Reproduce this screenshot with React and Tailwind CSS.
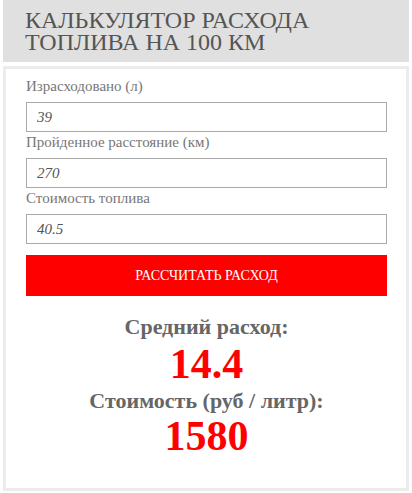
import React, { useState } from 'react';

const Field = ({ label, value, onChange }) => (
  <div>
    <label className="block mb-[6px] text-[15px] leading-[20px] text-[#777]">{label}</label>
    <input
      type="text"
      value={value}
      onChange={(e) => onChange(e.target.value)}
      className="block w-full h-[30px] border border-[#aaa] px-[10px] text-[15px] italic text-[#555] outline-none font-['Liberation_Serif',serif]"
    />
  </div>
);

export default function App() {
  const [liters, setLiters] = useState('39');
  const [distance, setDistance] = useState('270');
  const [price, setPrice] = useState('40.5');
  const [result, setResult] = useState({ avg: '14.4', cost: '1580' });

  // average per 100 km and total spend
  const calculate = () => {
    const l = parseFloat(liters);
    const d = parseFloat(distance);
    const p = parseFloat(price);
    if (!l || !d) return;
    setResult({
      avg: (Math.round((l / d) * 1000) / 10).toString(),
      cost: Math.round(l * (p || 0)).toString(),
    });
  };

  return (
    <div className="w-[412px] px-[3px] bg-white font-['Liberation_Serif',serif]">
      <div className="h-[62px] bg-[#e0e0e0] pl-[22px] pt-[9px]">
        <h1 className="text-[24px] leading-[22px] uppercase text-[#555] font-normal">
          Калькулятор расхода
          <br />
          топлива на 100 км
        </h1>
      </div>

      <div className="mt-[4px] border-[3px] border-[#ececec] pl-[20px] pr-[19px] pt-[7px] pb-[30px]">
        <Field label="Израсходовано (л)" value={liters} onChange={setLiters} />
        <Field label="Пройденное расстояние (км)" value={distance} onChange={setDistance} />
        <Field label="Стоимость топлива" value={price} onChange={setPrice} />

        <button
          onClick={calculate}
          className="mt-[11px] w-full h-[41px] bg-[#ff0000] text-white text-[14px] uppercase font-['Liberation_Serif',serif]"
        >
          Рассчитать расход
        </button>

        <div className="mt-[18px] text-center">
          <div className="text-[22px] leading-[26px] font-bold text-[#666]">Средний расход:</div>
          <div className="text-[42px] leading-[48px] font-bold text-[#ff0000]">{result.avg}</div>
          <div className="text-[22px] leading-[26px] font-bold text-[#666]">Стоимость (руб / литр):</div>
          <div className="text-[42px] leading-[44px] font-bold text-[#ff0000]">{result.cost}</div>
        </div>
      </div>
    </div>
  );
}
